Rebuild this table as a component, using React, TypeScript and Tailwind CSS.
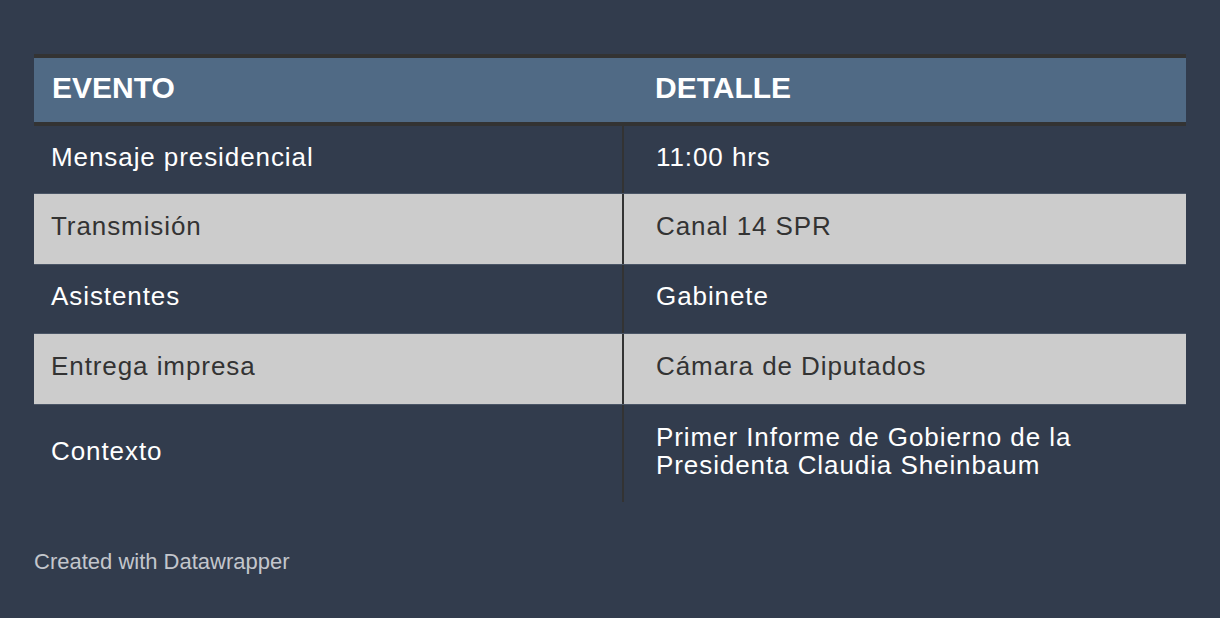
import React from "react";

const rows: { a: string; b: React.ReactNode; gray: boolean; h: string }[] = [
  { a: "Mensaje presidencial", b: "11:00 hrs", gray: false, h: "h-[68px]" },
  { a: "Transmisión", b: "Canal 14 SPR", gray: true, h: "h-[71px]" },
  { a: "Asistentes", b: "Gabinete", gray: false, h: "h-[69px]" },
  { a: "Entrega impresa", b: "Cámara de Diputados", gray: true, h: "h-[71px]" },
  {
    a: "Contexto",
    b: (
      <>
        Primer Informe de Gobierno de la
        <br />
        Presidenta Claudia Sheinbaum
      </>
    ),
    gray: false,
    h: "h-[97px]",
  },
];

export default function App() {
  return (
    <div
      className="w-[1220px] h-[618px] bg-[#323c4d] pt-[54px] px-[34px] overflow-hidden"
      style={{ fontFamily: '"Liberation Sans", Arial, sans-serif' }}
    >
      <div className="w-[1152px]">
        <div className="flex h-[72px] bg-[#506a85] border-y-4 border-[#333333] text-white font-bold text-[30px]">
          <div className="w-[590px] pl-[18px] pb-[6px] flex items-center">EVENTO</div>
          <div className="flex-1 pl-[31px] pb-[6px] flex items-center">DETALLE</div>
        </div>
        {rows.map((r, i) => (
          <div
            key={i}
            className={`flex ${r.h} ${
              r.gray ? "bg-[#cccccc] text-[#333333]" : "text-white"
            } ${i < rows.length - 1 ? "border-b border-[#4a5566]" : ""} text-[26px] tracking-[0.92px] leading-[28px]`}
          >
            <div className="w-[590px] pl-[17px] pb-[6px] flex items-center border-r-2 border-[#333333]">{r.a}</div>
            <div className="flex-1 pl-[32px] pb-[6px] flex items-center">{r.b}</div>
          </div>
        ))}
        <div className="mt-[43px] text-[22px] text-[#c3c6cc]">Created with Datawrapper</div>
      </div>
    </div>
  );
}
